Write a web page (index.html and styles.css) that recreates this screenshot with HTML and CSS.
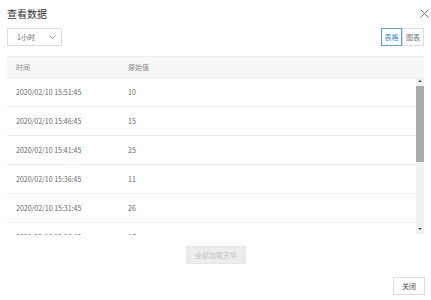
FILE: index.html
```html
<!DOCTYPE html>
<html lang="zh-CN">
<head>
    <meta charset="UTF-8">
    <meta name="viewport" content="width=device-width, initial-scale=1.0">
    <title>查看数据</title>
    <link rel="stylesheet" href="styles.css">
</head>
<body>
    <div class="dialog">
        <div class="dialog-head">
            <h2>查看数据</h2>
            <button class="close" type="button" aria-label="关闭">
                <svg width="9" height="9" viewBox="0 0 9 9"><path d="M0.5 0.5 L8.5 8.5 M8.5 0.5 L0.5 8.5" stroke="#777" stroke-width="1" fill="none"/></svg>
            </button>
        </div>
        <div class="toolbar">
            <div class="select">
                <span>1小时</span>
                <svg width="7" height="4" viewBox="0 0 7 4"><path d="M0.5 0.5 L3.5 3.5 L6.5 0.5" stroke="#888" stroke-width="0.9" fill="none"/></svg>
            </div>
            <div class="switch">
                <button type="button" class="on">表格</button>
                <button type="button">图表</button>
            </div>
        </div>
        <div class="grid">
            <div class="grid-head">
                <span class="col-time">时间</span>
                <span>原始值</span>
            </div>
            <div class="grid-body">
                <div class="rows">
                    <div class="row"><span class="col-time">2020/02/10 15:51:45</span><span>10</span></div>
                    <div class="row"><span class="col-time">2020/02/10 15:46:45</span><span>15</span></div>
                    <div class="row"><span class="col-time">2020/02/10 15:41:45</span><span>25</span></div>
                    <div class="row"><span class="col-time">2020/02/10 15:36:45</span><span>11</span></div>
                    <div class="row"><span class="col-time">2020/02/10 15:31:45</span><span>26</span></div>
                    <div class="row"><span class="col-time">2020/02/10 15:26:45</span><span>17</span></div>
                </div>
                <div class="scrollbar">
                    <span class="arrow up"></span>
                    <span class="thumb"></span>
                    <span class="track"></span>
                    <span class="arrow down"></span>
                </div>
            </div>
        </div>
        <div class="more">
            <button type="button" disabled>全部加载完毕</button>
        </div>
        <div class="footer">
            <button type="button">关闭</button>
        </div>
    </div>
</body>
</html>
```
FILE: styles.css
```css
body {
    margin: 0;
    padding: 0;
    background: #fff;
    font-family: "Noto Sans CJK SC", "Noto Sans", sans-serif;
    color: #666;
}
button {
    font-family: inherit;
    cursor: pointer;
}
.dialog {
    width: 431px;
    height: 300px;
    padding: 0 6px 0 7px;
    box-sizing: border-box;
}
.dialog-head {
    height: 26px;
    display: flex;
    align-items: center;
    justify-content: space-between;
}
.dialog-head h2 {
    margin: 0;
    font-size: 10px;
    font-weight: normal;
    color: #333;
}
.close {
    border: 0;
    background: none;
    padding: 0;
    margin-right: -4px;
    display: flex;
}
.toolbar {
    margin-top: 2px;
    height: 18px;
    display: flex;
    justify-content: space-between;
}
.select {
    width: 55px;
    box-sizing: border-box;
    border: 1px solid #ddd;
    display: flex;
    align-items: center;
    justify-content: space-between;
    padding: 0 5px 0 9px;
    font-size: 7px;
    color: #666;
}
.switch {
    display: flex;
    margin-right: 1px;
}
.switch button {
    width: 22px;
    height: 18px;
    padding: 0;
    border: 1px solid #ddd;
    background: #fff;
    font-size: 7px;
    color: #777;
}
.switch button.on {
    width: 21px;
    border-color: #5a9ee6;
    color: #3f8ae0;
}
.grid {
    margin-top: 10px;
    margin-right: 1px;
}
.grid-head {
    height: 21px;
    display: flex;
    align-items: center;
    padding-left: 9px;
    background: #f7f7f7;
    border-top: 1px solid #f0f0f0;
    box-sizing: border-box;
    font-size: 7px;
    color: #888;
}
.col-time {
    width: 112px;
}
.grid-body {
    height: 158px;
    display: flex;
}
.rows {
    flex: 1;
    overflow: hidden;
}
.row {
    height: 29px;
    box-sizing: border-box;
    border-top: 1px solid #eee;
    display: flex;
    align-items: center;
    padding-left: 9px;
    font-size: 7px;
    color: #666;
}
.scrollbar {
    width: 8px;
    height: 157px;
    background: #f0f0f0;
    display: flex;
    flex-direction: column;
    align-items: center;
}
.arrow {
    height: 9px;
    width: 8px;
    position: relative;
}
.arrow::after {
    content: "";
    position: absolute;
    left: 2px;
    top: 3px;
    border-left: 2px solid transparent;
    border-right: 2px solid transparent;
}
.arrow.up::after {
    border-bottom: 2px solid #555;
}
.arrow.down::after {
    border-top: 2px solid #555;
}
.thumb {
    width: 8px;
    height: 76px;
    background: #aaa;
}
.track {
    flex: 1;
}
.more {
    margin-top: 11px;
    display: flex;
    justify-content: center;
}
.more button {
    width: 60px;
    height: 18px;
    padding: 0;
    border: 1px solid #e6e6e6;
    background: #ececec;
    color: #c4c4c4;
    font-size: 7px;
    cursor: default;
}
.footer {
    margin-top: 13px;
    display: flex;
    justify-content: flex-end;
}
.footer button {
    width: 32px;
    height: 18px;
    padding: 0;
    border: 1px solid #ddd;
    background: #fff;
    color: #444;
    font-size: 7px;
}
```
